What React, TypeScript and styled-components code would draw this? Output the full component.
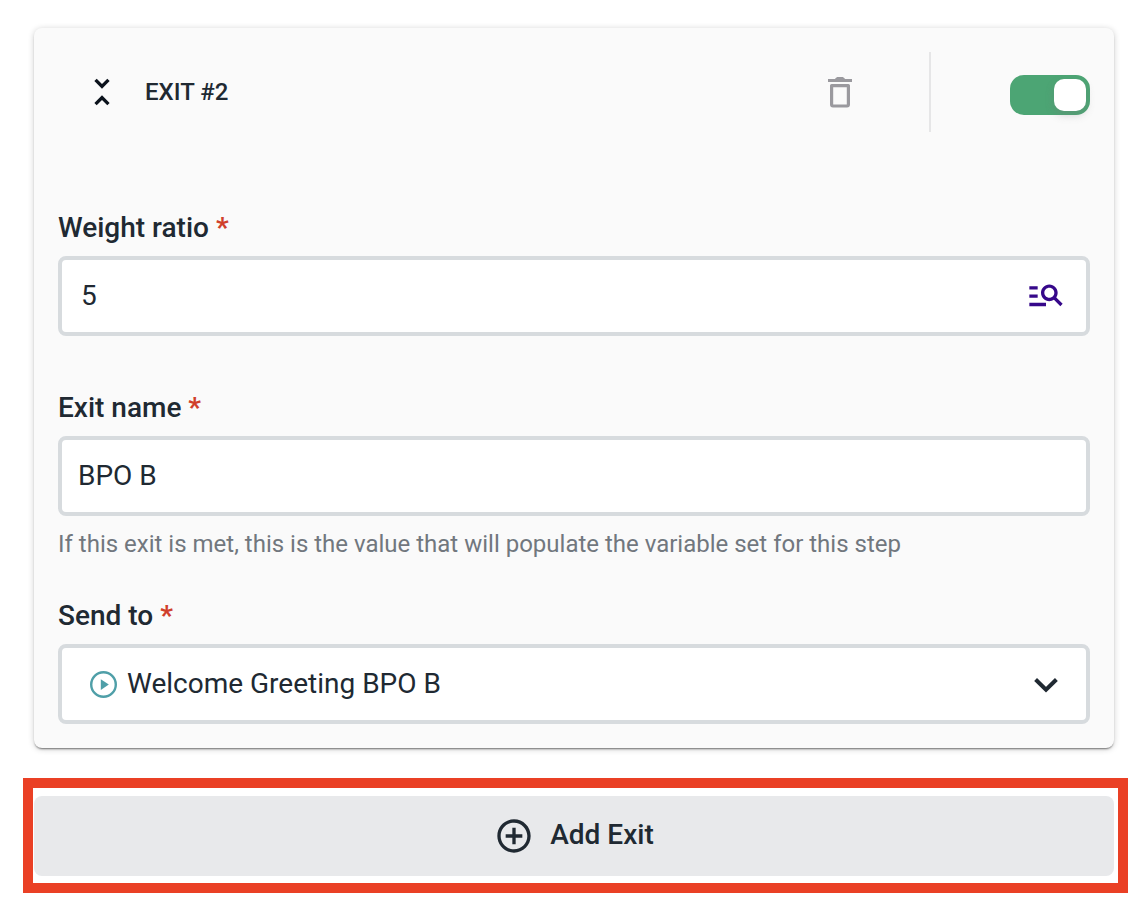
import React, { useState } from "react";
import styled, { createGlobalStyle } from "styled-components";

const ink = "#202932";

const GlobalStyle = createGlobalStyle`
  *, *::before, *::after { box-sizing: border-box; }
  body {
    margin: 0;
    background: #ffffff;
    color: ${ink};
    font-family: Roboto, "Liberation Sans", sans-serif;
  }
  button, input, select { font: inherit; color: inherit; }
`;

const Page = styled.main`
  display: flex;
  flex-direction: column;
  gap: 30px;
  padding: 28px 20px 19px 23px;
`;

const Card = styled.section`
  margin: 0 14px 0 11px;
  padding: 24px;
  border-radius: 8px;
  background: #fafafa;
  box-shadow: 0 2px 2px -1px rgba(0, 0, 0, 0.5), 0 1px 6px rgba(0, 0, 0, 0.2);
`;

const CardHeader = styled.header`
  display: flex;
  align-items: center;
  height: 80px;
  margin-bottom: 80px;
  padding-left: 24px;
`;

const IconButton = styled.button<{ $color: string }>`
  display: flex;
  flex: none;
  padding: 0;
  border: 0;
  background: none;
  color: ${(p) => p.$color};
  cursor: pointer;
`;

const Title = styled.h2`
  flex: 1;
  margin: 0 0 0 23px;
  font-size: 24px;
  font-weight: 500;
  line-height: 32px;
`;

const ToggleArea = styled.div`
  display: flex;
  align-items: center;
  justify-content: flex-end;
  width: 161px;
  height: 80px;
  margin-left: 69px;
  padding-top: 6px;
  border-left: 2px solid #e6e6e7;
`;

const Toggle = styled.input`
  appearance: none;
  display: flex;
  width: 80px;
  height: 40px;
  margin: 0;
  padding: 4px;
  border-radius: 14px;
  background: #a9adb1;
  cursor: pointer;

  &::before {
    content: "";
    width: 32px;
    height: 32px;
    border-radius: 10px;
    background: #ffffff;
    box-shadow: 0 4px 8px rgba(120, 120, 120, 0.3);
  }

  &:checked {
    justify-content: flex-end;
    background: #4ca574;
  }
`;

const Fields = styled.div`
  display: flex;
  flex-direction: column;
`;

const Field = styled.div<{ $gap?: number }>`
  display: flex;
  flex-direction: column;
  margin-top: ${(p) => p.$gap ?? 0}px;
`;

const Label = styled.label`
  margin-bottom: 12px;
  font-size: 28px;
  font-weight: 500;
  line-height: 32px;
`;

const Required = styled.span`
  color: #d03f2b;
  font-weight: 700;
`;

const Control = styled.div`
  display: grid;
  grid-template-columns: auto 1fr auto;
  align-items: center;
  height: 80px;
  border: 4px solid #d7dbde;
  border-radius: 8px;
  background: #ffffff;
  font-size: 28px;
`;

const TextInput = styled.input<{ $inset: number }>`
  grid-area: 1 / 1 / 2 / 3;
  width: 100%;
  min-width: 0;
  height: 100%;
  padding: 0 16px 2px ${(p) => p.$inset}px;
  border: 0;
  outline: 0;
  background: none;
`;

const Lookup = styled(IconButton)`
  grid-area: 1 / 3;
  margin-right: 20px;
`;

const Select = styled.select`
  appearance: none;
  grid-area: 1 / 1 / 2 / 4;
  width: 100%;
  height: 100%;
  padding: 0 72px 2px 65px;
  border: 0;
  outline: 0;
  background: none;
`;

const Adornment = styled.span<{ $end?: boolean }>`
  display: flex;
  grid-area: 1 / ${(p) => (p.$end ? 3 : 1)};
  margin: ${(p) => (p.$end ? "0 26px 0 0" : "0 0 0 27px")};
  pointer-events: none;
`;

const Hint = styled.p`
  margin: 14px 0 0;
  color: #71777e;
  font-size: 24px;
  line-height: 28px;
`;

const Highlight = styled.div`
  padding: 8px 4px 7px 1px;
  border: 10px solid #ea4025;
`;

const AddButton = styled.button`
  display: flex;
  align-items: center;
  justify-content: center;
  gap: 16px;
  width: 100%;
  height: 80px;
  padding: 0;
  border: 0;
  border-radius: 8px;
  background: #e8e9eb;
  font-size: 28px;
  font-weight: 500;
  cursor: pointer;
`;

const AddLabel = styled.span`
  padding-bottom: 2px;
  line-height: 32px;
`;

const CollapseIcon = () => (
  <svg width="40" height="40" viewBox="0 0 24 24" fill="currentColor" aria-hidden="true">
    <path d="M7.41 18.59 8.83 20 12 16.83 15.17 20l1.41-1.41L12 14zM16.59 5.41 15.17 4 12 7.17 8.83 4 7.41 5.41 12 10z" />
  </svg>
);

const TrashIcon = () => (
  <svg width="40" height="40" viewBox="0 0 40 40" aria-hidden="true">
    <path d="M8 7h7c1-1.400 2-2 3-2h4c1 0 2 .6 3 2h7v3H8z" fill="currentColor" />
    <path
      d="M11.600 13.600h16.800v19q0 1.400-1.400 1.400H13q-1.400 0-1.400-1.400z"
      fill="none"
      stroke="currentColor"
      strokeWidth="3.200"
      strokeLinejoin="round"
    />
  </svg>
);

const LookupIcon = () => (
  <svg width="40" height="40" viewBox="0 0.9 24 24" fill="currentColor" aria-hidden="true">
    <path d="M7 9H2V7h5zm0 3H2v2h5zm13.590 7-3.830-3.830c-.8.52-1.740.83-2.760.83-2.760 0-5-2.240-5-5s2.240-5 5-5 5 2.240 5 5c0 1.020-.31 1.960-.83 2.750L22 17.590zM17 11c0-1.650-1.350-3-3-3s-3 1.350-3 3 1.350 3 3 3 3-1.350 3-3M2 19h10v-2H2z" />
  </svg>
);

const PlayIcon = () => (
  <svg width="29" height="29" viewBox="0 0 29 29" aria-hidden="true">
    <circle cx="14.500" cy="14.500" r="12.300" fill="none" stroke="#4f9fa8" strokeWidth="2.400" />
    <path d="M11.800 9.300v10.600l8-5.300z" fill="#4f9fa8" />
  </svg>
);

const ChevronIcon = () => (
  <svg width="28" height="20" viewBox="0 0 28 20" aria-hidden="true">
    <path d="M3.600 5.500 14 15.700 24.400 5.500" fill="none" stroke={ink} strokeWidth="4" />
  </svg>
);

const AddIcon = () => (
  <svg width="40" height="40" viewBox="0 0 24 24" fill="currentColor" aria-hidden="true">
    <path d="M13 7h-2v4H7v2h4v4h2v-4h4v-2h-4zm-1-5C6.480 2 2 6.480 2 12s4.480 10 10 10 10-4.480 10-10S17.520 2 12 2m0 18c-4.410 0-8-3.590-8-8s3.590-8 8-8 8 3.590 8 8-3.590 8-8 8" />
  </svg>
);

export default function App() {
  const [enabled, setEnabled] = useState(true);
  const [weight, setWeight] = useState("5");
  const [name, setName] = useState("BPO B");

  return (
    <>
      <GlobalStyle />
      <Page>
        <Card>
          <CardHeader>
            <IconButton type="button" $color="#0b121c" aria-label="Collapse exit">
              <CollapseIcon />
            </IconButton>
            <Title>EXIT #2</Title>
            <IconButton type="button" $color="#9a999e" aria-label="Delete exit">
              <TrashIcon />
            </IconButton>
            <ToggleArea>
              <Toggle
                type="checkbox"
                role="switch"
                aria-label="Enable exit"
                checked={enabled}
                onChange={(e) => setEnabled(e.target.checked)}
              />
            </ToggleArea>
          </CardHeader>
          <Fields>
            <Field>
              <Label htmlFor="weight">
                Weight ratio <Required>*</Required>
              </Label>
              <Control>
                <TextInput id="weight" $inset={19} value={weight} onChange={(e) => setWeight(e.target.value)} />
                <Lookup type="button" $color="#36088a" aria-label="Find variable">
                  <LookupIcon />
                </Lookup>
              </Control>
            </Field>
            <Field $gap={56}>
              <Label htmlFor="exit-name">
                Exit name <Required>*</Required>
              </Label>
              <Control>
                <TextInput
                  id="exit-name"
                  $inset={16}
                  value={name}
                  onChange={(e) => setName(e.target.value)}
                  aria-describedby="exit-name-hint"
                />
              </Control>
              <Hint id="exit-name-hint">
                If this exit is met, this is the value that will populate the variable set for this step
              </Hint>
            </Field>
            <Field $gap={42}>
              <Label htmlFor="send-to">
                Send to <Required>*</Required>
              </Label>
              <Control>
                <Select id="send-to">
                  <option>Welcome Greeting BPO B</option>
                </Select>
                <Adornment>
                  <PlayIcon />
                </Adornment>
                <Adornment $end>
                  <ChevronIcon />
                </Adornment>
              </Control>
            </Field>
          </Fields>
        </Card>
        <Highlight>
          <AddButton type="button">
            <AddIcon />
            <AddLabel>Add Exit</AddLabel>
          </AddButton>
        </Highlight>
      </Page>
    </>
  );
}
